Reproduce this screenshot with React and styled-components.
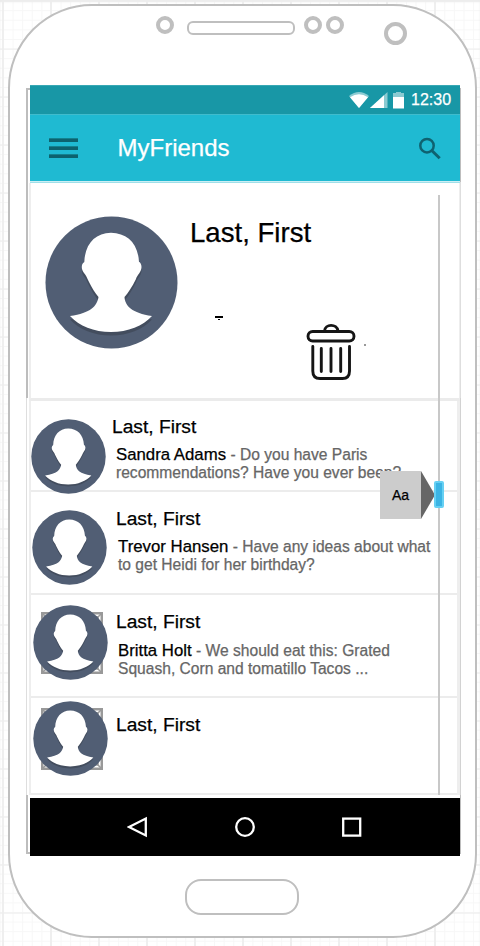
import React from "react";
import styled, { createGlobalStyle } from "styled-components";

const Global = createGlobalStyle`
  * { box-sizing: border-box; }
  body { margin: 0; font-family: "Liberation Sans", Arial, sans-serif; -webkit-text-stroke: 0.25px currentColor; }
`;

const Canvas = styled.main`
  width: 480px;
  height: 946px;
  padding: 4px 3px 8px 8px;
  overflow: hidden;
  background-color: #fff;
  background-image:
    linear-gradient(#ededed 1px, transparent 1px),
    linear-gradient(90deg, #efefef 2px, transparent 2px),
    linear-gradient(#f7f7f7 1px, transparent 1px),
    linear-gradient(90deg, #f7f7f7 1px, transparent 1px);
  background-size: 48px 48px, 48px 48px, 9.6px 9.6px, 9.6px 9.6px;
  background-position: 0 0.6px, 2px 0, 0 0.6px, 3px 0;
  box-shadow: inset 0 2px 2px #ececec;
`;

const Phone = styled.div`
  height: 934px;
  border: 2px solid #bfbfbf;
  border-radius: 84px;
  background: #fff;
  display: flex;
  flex-direction: column;
`;

const Sensors = styled.header`
  height: 79px;
  flex: none;
  display: flex;
  align-items: flex-start;
  padding: 10px 0 0 146px;
`;

const Ring = styled.span`
  width: ${(p) => p.$size}px;
  height: ${(p) => p.$size}px;
  margin: ${(p) => p.$top || 0}px 0 0 ${(p) => p.$left || 0}px;
  border: 4px solid #bfbfbf;
  border-radius: 50%;
`;

const Speaker = styled.span`
  width: 108px;
  height: 14px;
  margin: 5px 0 0 13px;
  border: 2px solid #bfbfbf;
  border-radius: 6px;
`;

const HomeButton = styled.div`
  width: 114px;
  height: 36px;
  flex: none;
  margin: 23px 0 0 175px;
  border: 2px solid #bfbfbf;
  border-radius: 16px;
`;

const Frame = styled.div`
  flex: none;
  width: 435px;
  height: 771px;
  margin-left: 16px;
  display: grid;
  grid-template-columns: 4px 430px 1px;
`;

const Edge = styled.div`
  display: flex;
  flex-direction: column;
  padding: 3px 0 1px;
  overflow: hidden;
`;

const EdgeSegment = styled.span`
  height: ${(p) => p.$height}px;
  border: 0 solid ${(p) => (p.$light ? "#dedede" : "#bdbdbd")};
  border-left-width: ${(p) => (p.$light ? 1 : 2)}px;
  border-top-width: ${(p) => (p.$cap ? 2 : 0)}px;
  border-bottom-width: ${(p) => (p.$foot ? 2 : 0)}px;
`;

const RightLine = styled.span`
  height: ${(p) => p.$height}px;
  background: ${(p) => p.$tone};
`;

const Screen = styled.div`
  display: flex;
  flex-direction: column;
  min-width: 0;
  position: relative;
`;

const StatusBar = styled.div`
  height: 29px;
  flex: none;
  display: flex;
  align-items: center;
  justify-content: flex-end;
  padding-right: 9px;
  background: #1897a6;
  border-top: 1px solid #38a8b4;
`;

const Clock = styled.span`
  width: 40px;
  margin-left: 6px;
  font-size: 16px;
  line-height: 28px;
  white-space: nowrap;
  color: #fff;
`;

const AppBar = styled.div`
  height: 67px;
  flex: none;
  display: flex;
  align-items: center;
  padding: 0 19px 0 19px;
  background: #1fbad2;
  border-top: 1px solid #40bccd;
`;

const MenuButton = styled.span`
  width: 29px;
  height: 20px;
  display: flex;
  flex-direction: column;
  justify-content: space-between;
  & > i { height: 4px; background: #0c626e; border-top: 1px solid #13818f; }
`;

const Title = styled.h1`
  flex: 1;
  margin: 0 0 0 39.5px;
  font-size: 24px;
  line-height: 30px;
  font-weight: 400;
  color: #fff;
`;

const BarShadow = styled.div`
  height: 2px;
  flex: none;
  background: linear-gradient(#cdeff4 50%, #9fdfe9 50%);
`;

const Hero = styled.section`
  height: 218px;
  flex: none;
  margin-left: -1px;
  padding: 33px 0 0 14px;
  display: flex;
  border: 2px solid #eee;
  border-top: 0;
  border-right-width: 1px;
  border-bottom: 3px solid #ebebeb;
`;

const HeroBody = styled.div`
  flex: 1;
  padding-left: 10px;
`;

const HeroName = styled.h2`
  margin: 1px 0 0 2px;
  font-size: 27.6px;
  line-height: 32px;
  font-weight: 400;
`;

const HeroTools = styled.div`
  display: flex;
  padding: 74px 0 0 27px;
`;

const Dash = styled.svg`
  margin: -8px 83px 0 0;
`;

const Mark = styled.i`
  width: 2px;
  height: 2px;
  margin: 21px 0 0 8px;
  background: #999;
`;

const List = styled.section`
  height: 394px;
  flex: none;
  margin-left: -1px;
  border-left: 2px solid #eee;
  border-right: 3px solid #eee;
`;

const Row = styled.article`
  height: ${(p) => p.$height}px;
  padding: ${(p) => p.$top}px 0 0 ${(p) => p.$left}px;
  border-bottom: 2px solid #ececec;
  display: flex;
  align-items: flex-start;
`;

const AvatarBox = styled.div`
  width: ${(p) => p.$size}px;
  height: ${(p) => p.$size}px;
  flex: none;
  position: relative;
  & > svg { display: block; position: relative; width: 100%; height: 100%; }
  & > svg.frame { position: absolute; left: 8px; top: 7px; width: 62px; height: 62px; }
`;

const Message = styled.div`
  margin: ${(p) => p.$top}px 0 0 ${(p) => p.$left}px;
  white-space: nowrap;
`;

const Name = styled.h3`
  margin: 0;
  font-size: 19.2px;
  line-height: 22px;
  font-weight: 400;
`;

const Preview = styled.p`
  margin: ${(p) => p.$top}px 0 0 ${(p) => p.$indent}px;
  font-size: 15.6px;
  line-height: 18px;
  color: #666;
`;

const Sender = styled.span`
  font-size: 16.8px;
  line-height: 18px;
  color: #000;
`;

const NavBar = styled.nav`
  height: 58px;
  flex: none;
  margin-top: 3px;
  display: flex;
  align-items: center;
  justify-content: center;
  gap: 85px;
  background: #000;
`;

const ScrollTrack = styled.div`
  position: absolute;
  left: 408px;
  top: 110px;
  width: 2px;
  height: 600px;
  background: #c8c8c8;
`;

const ScrollThumb = styled.div`
  position: absolute;
  left: -4px;
  top: 286px;
  width: 10px;
  height: 27px;
  background: #3bb4e4;
  border: 2px solid #66d0f3;
  border-radius: 2px;
`;

const ScrollLabel = styled.div`
  position: absolute;
  left: -58px;
  top: 276px;
  display: flex;
`;

const LabelText = styled.span`
  width: 41px;
  height: 48px;
  background: #ccc;
  font-size: 14px;
  line-height: 48px;
  text-align: center;
`;

function Avatar({ size, framed }) {
  return (
    <AvatarBox $size={size}>
      {framed && (
        <svg className="frame" viewBox="0 0 62 62" fill="none" stroke="#999">
          <rect x="1.25" y="1.25" width="59.5" height="59.5" strokeWidth="2.5" />
          <rect x="4.5" y="4.5" width="53" height="53" stroke="#bbb" />
          <path d="M2 2L60 60M60 2L2 60" strokeWidth="1.5" />
        </svg>
      )}
      <svg viewBox="0 0 133 133">
        <circle cx="66.5" cy="66.5" r="66" fill="#515e74" />
        <path transform="translate(0 3.5)" fill="#434d5e" d={PERSON} />
        <path fill="#fff" d={PERSON} />
      </svg>
    </AvatarBox>
  );
}

const PERSON =
  "M66 16.7C50 17 40 28 39.3 46C36 48 36 53 39 57C41 59 42 62 44 66C47 72 50 77 53.5 81C52 90 46 97 25 100C34 110 49 116 66 116C83 116 98 110 107 100C87 97 80 90 79.5 81C83 77 87 71 91 63C92 59 96.5 56 96.5 51C96.5 48 95 46 94 46C93 27 82 17 66 16.7Z";

const messages = [
  { height: 91, top: 18, left: 0, textTop: -3, textLeft: 6, gap: 8, indent: 4, sender: "Sandra Adams", lines: ["Do you have Paris", "recommendations? Have you ever been?"] },
  { height: 103, top: 18, left: 1, textTop: -2, textLeft: 9, gap: 8, indent: 2, sender: "Trevor Hansen", lines: ["Have any ideas about what", "to get Heidi for her birthday?"] },
  { height: 103, top: 10, left: 2, textTop: 6, textLeft: 8, gap: 9, indent: 2, framed: true, sender: "Britta Holt", lines: ["We should eat this: Grated", "Squash, Corn and tomatillo Tacos ..."] },
  { height: 97, top: 3, left: 2, textTop: 13, textLeft: 8, framed: true },
];

export default function App() {
  return (
    <Canvas>
      <Global />
      <Phone>
        <Sensors>
          <Ring $size={18} />
          <Speaker />
          <Ring $size={18} $left={9} />
          <Ring $size={18} $left={4} />
          <Ring $size={23} $left={40} $top={6} />
        </Sensors>
        <Frame>
          <Edge>
            <EdgeSegment $height={310} $cap />
            <EdgeSegment $height={397} $light />
            <EdgeSegment $height={59} $foot />
          </Edge>
          <Screen>
            <StatusBar>
              <svg width="56" height="19" viewBox="0 0 56 19">
                <path d="M0 5Q10 -3 20 5L10 17Z" fill="#8bcbd2" />
                <path d="M1 6.2Q10 0.5 19 6.2L10 17Z" fill="#fff" />
                <path d="M38.5 1V17H21Z" fill="#8bcbd2" />
                <path d="M35 4.2V17H21Z" fill="#fff" />
                <path d="M44 2H47V1H52V2H55V6H44Z" fill="#8bcbd2" />
                <path d="M44 6H55V17.5H44Z" fill="#fff" />
              </svg>
              <Clock>12:30</Clock>
            </StatusBar>
            <AppBar>
              <MenuButton><i /><i /><i /></MenuButton>
              <Title>MyFriends</Title>
              <svg width="23" height="23" viewBox="0 0 23 23" fill="none" stroke="#0f6270" strokeWidth="2.5">
                <circle cx="9" cy="8.7" r="6.7" />
                <path d="M13.5 13.2L21.7 21.2" strokeWidth="3" />
              </svg>
            </AppBar>
            <BarShadow />
            <Hero>
              <Avatar size={133} />
              <HeroBody>
                <HeroName>Last, First</HeroName>
                <HeroTools>
                  <Dash width="8" height="6" viewBox="0 0 8 6">
                    <path d="M0 1H8V3H0ZM3 4H5V5H3Z" />
                  </Dash>
                  <svg width="50" height="58" viewBox="0 0 50 58" fill="none" stroke="#151515" strokeWidth="2.9" strokeLinecap="round">
                    <rect x="2" y="8.5" width="46" height="9.5" rx="4.7" />
                    <path d="M18.5 8C19 0.5 31 0.5 32 8" />
                    <path d="M6.8 23.5V48Q6.8 55.5 14 55.5H36.5Q43.5 55.5 43.5 48V23.5" />
                    <path d="M15.3 25.5V48.5M25 25.5V48.5M34.7 25.5V48.5" />
                  </svg>
                  <Mark />
                </HeroTools>
              </HeroBody>
            </Hero>
            <List>
              {messages.map((m, i) => (
                <Row key={i} $height={m.height} $top={m.top} $left={m.left}>
                  <Avatar size={75} framed={m.framed} />
                  <Message $top={m.textTop} $left={m.textLeft}>
                    <Name>Last, First</Name>
                    {m.sender && (
                      <Preview $top={m.gap} $indent={m.indent}>
                        <Sender>{m.sender}</Sender> - {m.lines[0]}
                        <br />
                        {m.lines[1]}
                      </Preview>
                    )}
                  </Message>
                </Row>
              ))}
            </List>
            <NavBar>
              <svg width="22" height="22" viewBox="0 0 22 22" fill="none" stroke="#fff" strokeWidth="2.3">
                <path d="M18.8 2.5V19.5L2 11Z" />
              </svg>
              <svg width="22" height="22" viewBox="0 0 22 22" fill="none" stroke="#fff" strokeWidth="2.3">
                <circle cx="11" cy="11" r="8.8" />
              </svg>
              <svg width="22" height="22" viewBox="0 0 22 22" fill="none" stroke="#fff" strokeWidth="2.3">
                <rect x="2.2" y="2.6" width="17" height="17" />
              </svg>
            </NavBar>
            <ScrollTrack>
              <ScrollLabel>
                <LabelText>Aa</LabelText>
                <svg width="14" height="48" viewBox="0 0 14 48">
                  <path d="M0 0L14 24L0 48Z" fill="#666" />
                </svg>
              </ScrollLabel>
              <ScrollThumb />
            </ScrollTrack>
          </Screen>
          <Edge>
            <RightLine $height={94} $tone="#bdbdbd" />
            <RightLine $height={216} $tone="#dedede" />
            <RightLine $height={397} $tone="#d2d2d2" />
            <RightLine $height={59} $tone="#bdbdbd" />
          </Edge>
        </Frame>
        <HomeButton />
      </Phone>
    </Canvas>
  );
}
